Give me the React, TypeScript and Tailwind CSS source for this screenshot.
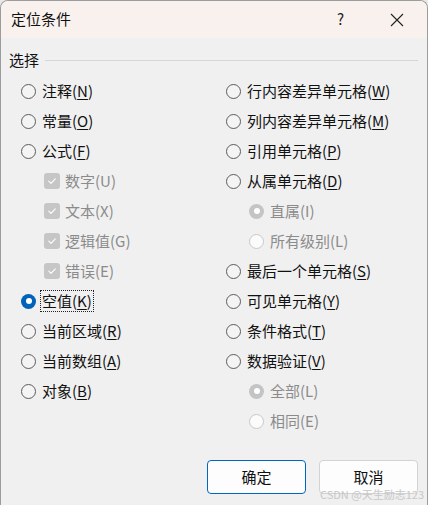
import React from "react";

const FONT = { fontFamily: '"Noto Sans CJK SC", "Noto Sans", sans-serif' };

type Item = {
  label: string;
  key?: string;
  kind: "radio" | "check";
  indent?: boolean;
  disabled?: boolean;
  selected?: boolean;
  focus?: boolean;
};

function Radio({ disabled, selected }: { disabled?: boolean; selected?: boolean }) {
  if (selected && !disabled) {
    return (
      <span className="flex h-[15px] w-[15px] shrink-0 items-center justify-center rounded-full bg-[#0062b8]">
        <span className="h-[6px] w-[6px] rounded-full bg-white" />
      </span>
    );
  }
  if (selected && disabled) {
    return (
      <span className="flex h-[15px] w-[15px] shrink-0 items-center justify-center rounded-full bg-[#c4c4c4]">
        <span className="h-[6px] w-[6px] rounded-full bg-white" />
      </span>
    );
  }
  if (disabled) {
    return <span className="h-[15px] w-[15px] shrink-0 rounded-full border border-[#c8c8c8] bg-[#fbfbfb]" />;
  }
  return <span className="h-[15px] w-[15px] shrink-0 rounded-full border border-[#5c5c5c] bg-[#f4f4f4]" />;
}

function Check() {
  return (
    <span className="flex h-[16px] w-[16px] shrink-0 items-center justify-center rounded-[3px] bg-[#c6c6c6]">
      <svg width="10" height="10" viewBox="0 0 10 10" fill="none">
        <path d="M1.8 5.2 L4 7.3 L8.3 2.8" stroke="white" strokeWidth="1.1" strokeLinecap="round" strokeLinejoin="round" />
      </svg>
    </span>
  );
}

function Row({ item, indentPx }: { item: Item; indentPx: number }) {
  const text = (
    <span className={item.disabled ? "text-[#8b8b8b]" : "text-[#111111]"}>
      {item.label}
      {item.key ? (
        <>
          (
          {item.disabled ? item.key : <span className="underline underline-offset-[2px] decoration-1">{item.key}</span>}
          )
        </>
      ) : null}
    </span>
  );
  return (
    <div className="flex h-[30px] items-center" style={{ paddingLeft: item.indent ? indentPx : 0 }}>
      {item.kind === "radio" ? <Radio disabled={item.disabled} selected={item.selected} /> : <Check />}
      {item.focus ? (
        <span className="ml-[4px] border border-dotted border-[#222] px-[1px] leading-[20px]">{text}</span>
      ) : (
        <span className={item.kind === "check" ? "ml-[5px] leading-[20px]" : "ml-[6px] leading-[20px]"}>{text}</span>
      )}
    </div>
  );
}

const left: Item[] = [
  { label: "注释", key: "N", kind: "radio" },
  { label: "常量", key: "O", kind: "radio" },
  { label: "公式", key: "F", kind: "radio" },
  { label: "数字", key: "U", kind: "check", indent: true, disabled: true },
  { label: "文本", key: "X", kind: "check", indent: true, disabled: true },
  { label: "逻辑值", key: "G", kind: "check", indent: true, disabled: true },
  { label: "错误", key: "E", kind: "check", indent: true, disabled: true },
  { label: "空值", key: "K", kind: "radio", selected: true, focus: true },
  { label: "当前区域", key: "R", kind: "radio" },
  { label: "当前数组", key: "A", kind: "radio" },
  { label: "对象", key: "B", kind: "radio" },
];

const right: Item[] = [
  { label: "行内容差异单元格", key: "W", kind: "radio" },
  { label: "列内容差异单元格", key: "M", kind: "radio" },
  { label: "引用单元格", key: "P", kind: "radio" },
  { label: "从属单元格", key: "D", kind: "radio" },
  { label: "直属", key: "I", kind: "radio", indent: true, disabled: true, selected: true },
  { label: "所有级别", key: "L", kind: "radio", indent: true, disabled: true },
  { label: "最后一个单元格", key: "S", kind: "radio" },
  { label: "可见单元格", key: "Y", kind: "radio" },
  { label: "条件格式", key: "T", kind: "radio" },
  { label: "数据验证", key: "V", kind: "radio" },
  { label: "全部", key: "L", kind: "radio", indent: true, disabled: true, selected: true },
  { label: "相同", key: "E", kind: "radio", indent: true, disabled: true },
];

export default function App() {
  return (
    <div className="h-[505px] w-[428px] overflow-hidden bg-[#e9e9e9]" style={FONT}>
      <div className="relative flex h-[505px] w-[428px] flex-col overflow-hidden rounded-t-[8px] border-x border-t border-[#9c9c9c] bg-[#f0f0f0] text-[15px]">
        {/* Title bar */}
        <div className="flex h-[37px] shrink-0 items-center bg-[#f9f1ee] pl-[10px]">
          <span className="text-[15px] text-[#111]">定位条件</span>
          <span className="ml-auto mr-[46px] text-[15px] text-[#222]">?</span>
          <span className="mr-[23px] flex h-[14px] w-[14px] items-center justify-center">
            <svg width="14" height="14" viewBox="0 0 14 14">
              <path d="M1 1 L13 13 M13 1 L1 13" stroke="#222" strokeWidth="1.1" />
            </svg>
          </span>
        </div>

        {/* Group label */}
        <div className="mt-[12px] flex h-[20px] items-center pl-[8px] pr-[9px]">
          <span className="text-[15px] leading-[20px] text-[#111]">选择</span>
          <span className="ml-[6px] h-px flex-1 bg-[#d6d6d6]" />
        </div>

        {/* Options */}
        <div className="mt-[6px] grid grid-cols-[225px_1fr]">
          <div className="flex flex-col pl-[20px]">
            {left.map((it, i) => (
              <Row key={i} item={it} indentPx={23} />
            ))}
          </div>
          <div className="flex flex-col">
            {right.map((it, i) => (
              <Row key={i} item={it} indentPx={23} />
            ))}
          </div>
        </div>

        {/* Buttons */}
        <div className="mt-[24px] flex justify-end gap-[13px] pr-[9px]">
          <button className="flex h-[34px] w-[99px] items-center justify-center rounded-[4px] border border-[#0067c0] bg-[#fdfdfd] text-[15px] text-[#111]">
            确定
          </button>
          <button className="flex h-[34px] w-[99px] items-center justify-center rounded-[4px] border border-[#d3d3d3] bg-[#fdfdfd] text-[15px] text-[#111]">
            取消
          </button>
        </div>

        <span className="absolute bottom-[4px] right-[3px] text-[11px] leading-[13px] text-[#c4c4c4] opacity-90">
          CSDN @天生励志123
        </span>
      </div>
    </div>
  );
}
